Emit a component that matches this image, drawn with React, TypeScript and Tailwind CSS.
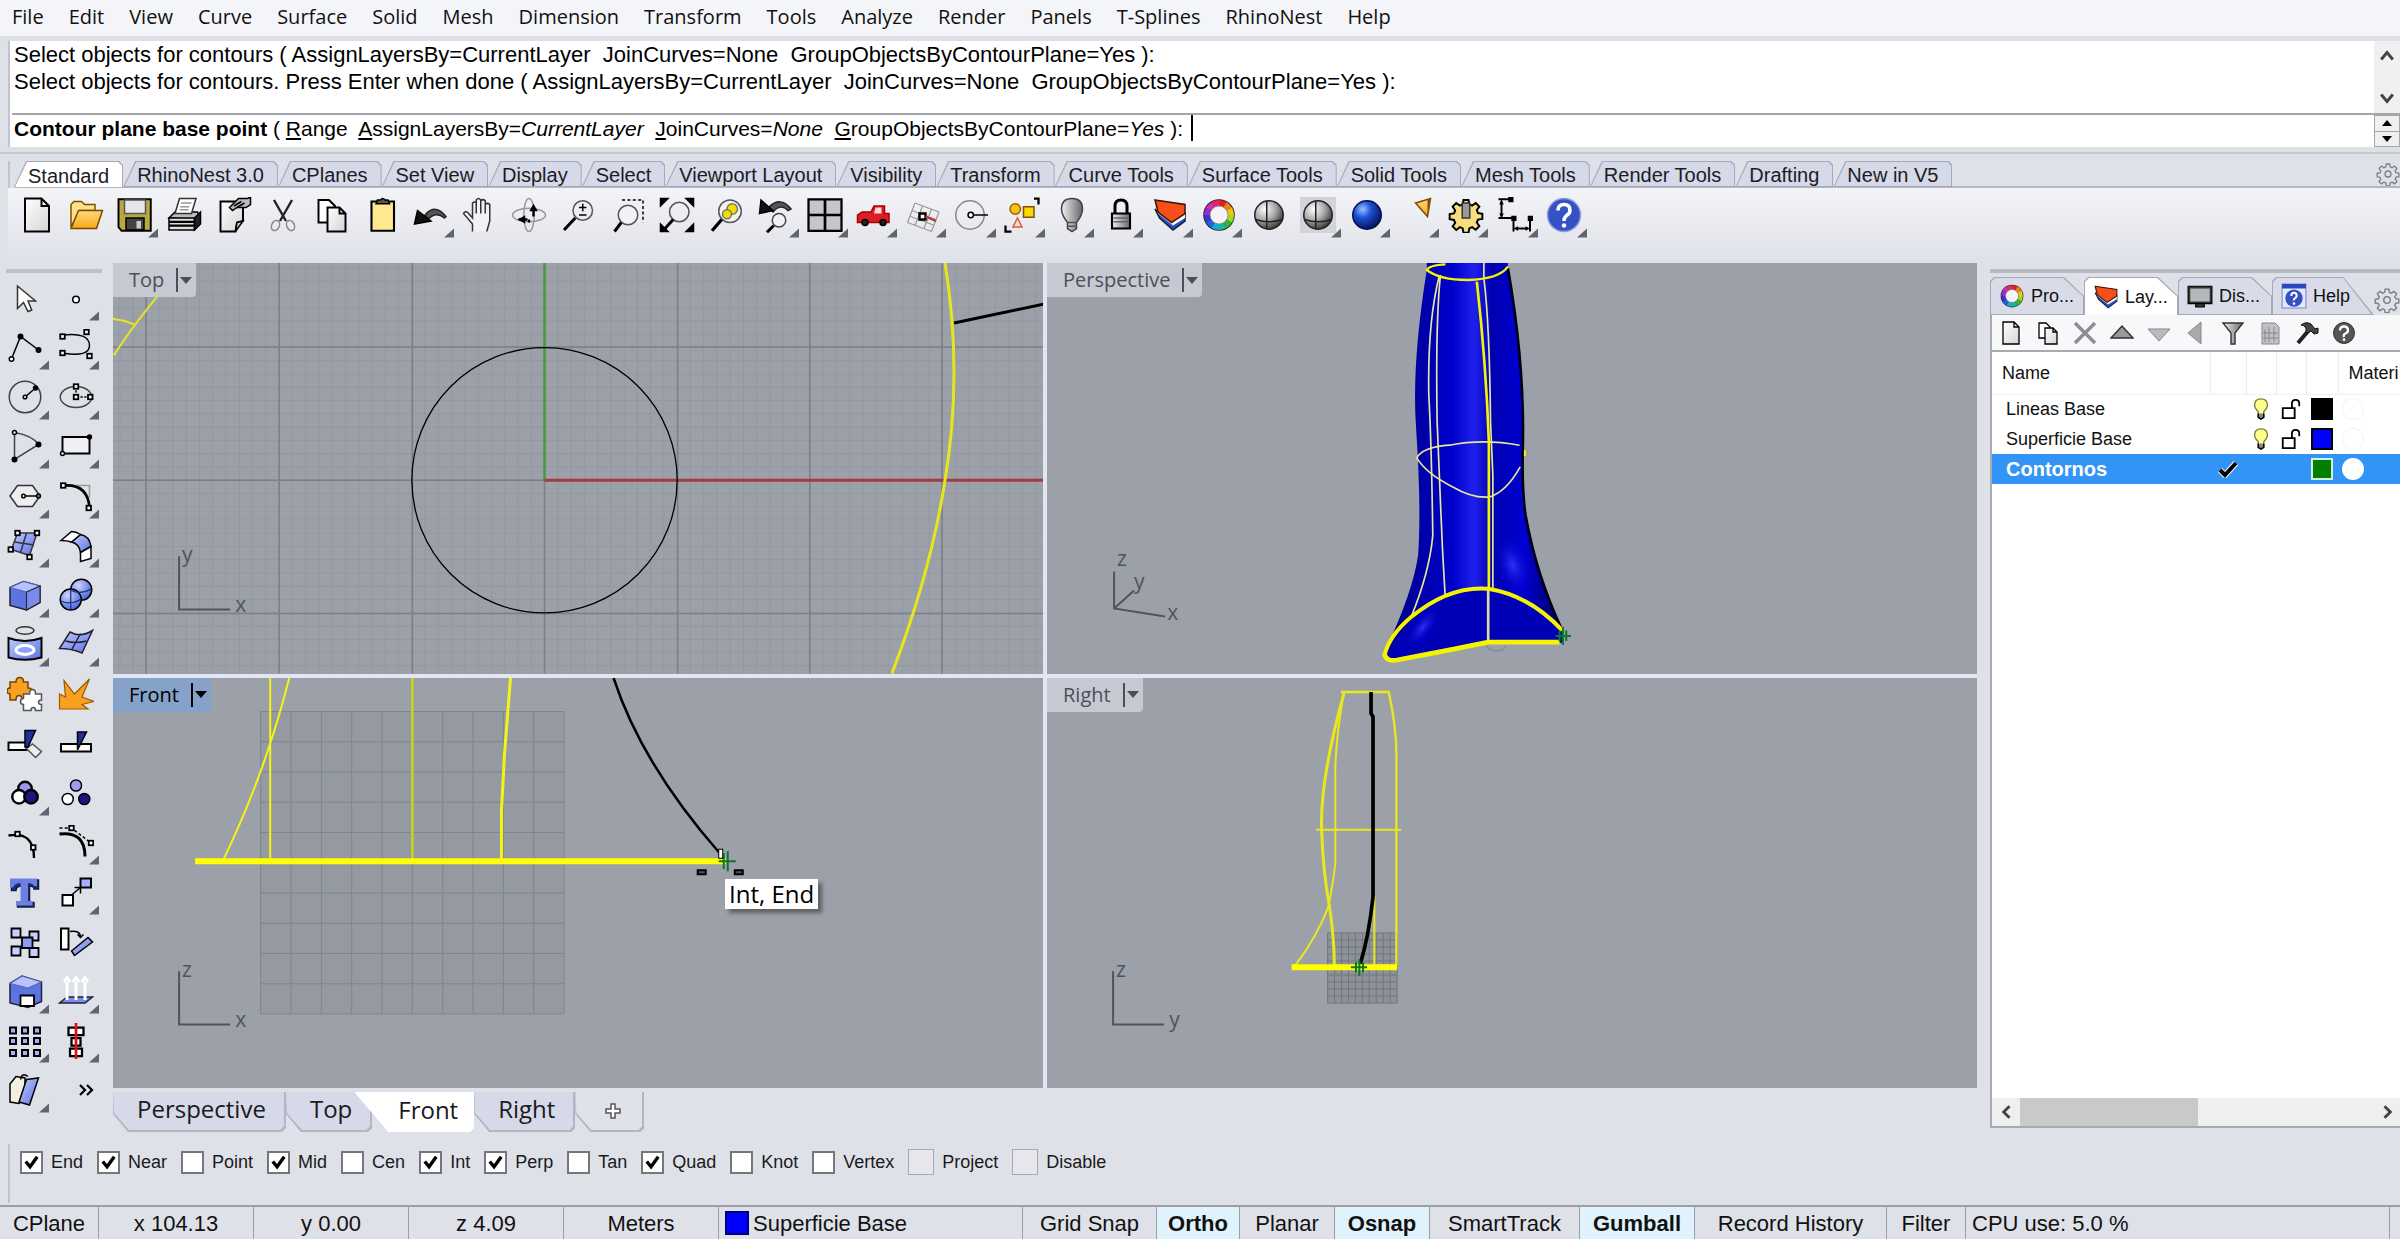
import { ReactNode, useState } from "react";

interface Tool {
  name: string;
  icon: ReactNode;
  menu?: boolean;
}

interface Layer {
  name: string;
  color: string;
  current?: boolean;
}

const MENUS = [
  "File", "Edit", "View", "Curve", "Surface", "Solid", "Mesh", "Dimension", "Transform",
  "Tools", "Analyze", "Render", "Panels", "T-Splines", "RhinoNest", "Help",
];

const TOOLBAR_TABS = [
  "Standard", "RhinoNest 3.0", "CPlanes", "Set View", "Display", "Select", "Viewport Layout",
  "Visibility", "Transform", "Curve Tools", "Surface Tools", "Solid Tools", "Mesh Tools",
  "Render Tools", "Drafting", "New in V5",
];

const LAYERS: Layer[] = [
  { name: "Lineas Base", color: "#000000" },
  { name: "Superficie Base", color: "#0000ff" },
  { name: "Contornos", color: "#008000", current: true },
];

const OSNAPS = [
  { name: "End", on: true },
  { name: "Near", on: true },
  { name: "Point", on: false },
  { name: "Mid", on: true },
  { name: "Cen", on: false },
  { name: "Int", on: true },
  { name: "Perp", on: true },
  { name: "Tan", on: false },
  { name: "Quad", on: true },
  { name: "Knot", on: false },
  { name: "Vertex", on: false },
  { name: "Project", on: false, dim: true },
  { name: "Disable", on: false, dim: true },
];

function Svg({ children, className = "size-9" }: { children: ReactNode; className?: string }) {
  return (
    <svg viewBox="0 0 24 24" className={className} fill="none" stroke="#000" strokeWidth={1} aria-hidden="true">
      {children}
    </svg>
  );
}

// gradients shared by every icon and by the shaded view
function Defs() {
  return (
    <svg className="absolute size-0" aria-hidden="true">
      <defs>
        <linearGradient id="gPage" x1="0" y1="0" x2="1" y2="1">
          <stop offset="0" stopColor="#fff" />
          <stop offset="1" stopColor="#d4d4d4" />
        </linearGradient>
        <linearGradient id="gFolder" x1="0" y1="0" x2="0" y2="1">
          <stop offset="0" stopColor="#ffd978" />
          <stop offset="1" stopColor="#f7a81b" />
        </linearGradient>
        <linearGradient id="gBlue" x1="0" y1="0" x2="1" y2="1">
          <stop offset="0" stopColor="#c3cbff" />
          <stop offset="1" stopColor="#5a72e0" />
        </linearGradient>
        <linearGradient id="gGrey" x1="0" y1="0" x2="1" y2="0">
          <stop offset="0" stopColor="#f0f0f0" />
          <stop offset="1" stopColor="#666" />
        </linearGradient>
        <radialGradient id="gBall" cx="0.35" cy="0.3" r="0.75">
          <stop offset="0" stopColor="#fff" />
          <stop offset="0.5" stopColor="#aaa" />
          <stop offset="1" stopColor="#333" />
        </radialGradient>
        <radialGradient id="gBallBlue" cx="0.35" cy="0.3" r="0.75">
          <stop offset="0" stopColor="#9cc4ff" />
          <stop offset="0.4" stopColor="#1c50d8" />
          <stop offset="1" stopColor="#02114f" />
        </radialGradient>
        <radialGradient id="gSoftBall" cx="0.35" cy="0.3" r="0.8">
          <stop offset="0" stopColor="#cdd6ff" />
          <stop offset="1" stopColor="#3e5bd0" />
        </radialGradient>
        <linearGradient id="gHandle" x1="0" y1="0" x2="1" y2="0">
          <stop offset="0" stopColor="#000078" />
          <stop offset="0.2" stopColor="#0000a8" />
          <stop offset="0.38" stopColor="#0000cc" />
          <stop offset="0.5" stopColor="#2020ec" />
          <stop offset="0.6" stopColor="#0000b0" />
          <stop offset="0.78" stopColor="#0000d2" />
          <stop offset="1" stopColor="#00005c" />
        </linearGradient>
        <radialGradient id="gHandleGlow">
          <stop offset="0" stopColor="#3030f4" />
          <stop offset="1" stopColor="#0000d0" stopOpacity="0" />
        </radialGradient>
        <pattern id="fineGrid" width="13.25" height="13.25" patternUnits="userSpaceOnUse" x="33" y="4.4">
          <path d="M0 .5H13.25M.5 0V13.25" fill="none" stroke="#7f858e" strokeOpacity="0.3" />
        </pattern>
      </defs>
    </svg>
  );
}

const HUES = ["#e02020", "#f08010", "#f0c810", "#a8d818", "#30b830", "#18b890", "#18a8d8", "#2060d8", "#4030c8", "#9030c8", "#d030b0", "#e02868"];

const colorWheel = (
  <>
    <circle cx="12" cy="12" r="10.5" fill="#222" stroke="none" />
    {HUES.map((hue, i) => (
      <circle key={hue} cx="12" cy="12" r="8" stroke={hue} strokeWidth="4" strokeDasharray="4.3 46" transform={`rotate(${i * 30 - 90} 12 12)`} />
    ))}
    <circle cx="12" cy="12" r="6" fill="#f4f4f8" stroke="#888" strokeWidth=".5" />
  </>
);

const layerShape = (
  <>
    <path d="M2 8 5 14 14 22 22 16V11L14 18z" fill="#2550c0" stroke="#123" />
    <path d="M2 5 4 11 14 19 22 14V9L14 15z" fill="#f4f4ff" stroke="none" />
    <path d="M2 2 22 5V11L13 17 4 10z" fill="#f4501c" stroke="#401000" />
  </>
);

const newPage = <path d="M4 1h11l5 5v17H4z M15 1v5h5" fill="url(#gPage)" strokeWidth="1.3" />;

const copyPages = (
  <>
    <path d="M3 2h7l4 4v11H3z" fill="#fff" strokeWidth="1.3" />
    <path d="M9 7h8l4 4v12H9z M17 7v4h4" fill="url(#gPage)" strokeWidth="1.3" />
  </>
);

const gearPath =
  "M10.3 2h3.4l.5 2.9 1.9.8 2.4-1.7 2.4 2.4-1.7 2.4.8 1.9 2.9.5v3.4l-2.9.5-.8 1.9 1.7 2.4-2.4 2.4-2.4-1.7-1.9.8-.5 2.9h-3.4l-.5-2.9-1.9-.8L5.5 22 3.1 19.6l1.7-2.4-.8-1.9-2.9-.5v-3.4l2.9-.5.8-1.9L3.1 6.4 5.5 4l2.4 1.7 1.9-.8z";

const STANDARD: Tool[] = [
  { name: "New", icon: newPage },
  {
    name: "Open",
    icon: (
      <>
        <path d="M2 20V5l2-2h5l2 2h7v4H8z" fill="#ffe08a" stroke="#7a5200" />
        <path d="M2 21 7 9h16l-4 12z" fill="url(#gFolder)" stroke="#7a4a00" />
      </>
    ),
  },
  {
    name: "Save",
    menu: true,
    icon: (
      <>
        <path d="M1 1.5h21.5v21H3L1 20z" fill="#b8a840" strokeWidth="1.3" />
        <path d="M5 2h14v9H5z" fill="#e4e6ea" stroke="#555" />
        <path d="M6 14h12v8H6z" fill="#444" />
        <path d="M13 16h3v5h-3z" fill="#ccc" stroke="none" />
      </>
    ),
  },
  {
    name: "Print",
    icon: (
      <>
        <path d="M2 14 6 10h15l1 2-3 3z" fill="#bbb" />
        <path d="M6 11 9 1h11l-3 10z" fill="#fff" stroke="#333" />
        <path d="M10 4h7M9.5 6.5h6M9 8.5h6" stroke="#999" />
        <path d="M2 14h17v8H2z" fill="#ddd" />
        <path d="M19 14 23 10v8l-4 4z" fill="#222" />
        <path d="M2 16.5h17M2 19h17" strokeWidth="1.5" />
      </>
    ),
  },
  {
    name: "Properties",
    icon: (
      <>
        <path d="M3 3h15v13l-4 1-1 6H3z" fill="url(#gPage)" strokeWidth="1.3" />
        <path d="M13 23l1-6 4-1z" fill="#ccc" />
        <path d="M9 7 15 1h6l2-1v5l-3 2h-6l-3 2z" fill="#bbb" />
        <path d="M12 6l5-3M14 7l5-3" />
      </>
    ),
  },
  {
    name: "Cut",
    icon: (
      <>
        <path d="M6 2l8 14M18 2l-8 14" stroke="#222" strokeWidth="1.6" />
        <ellipse cx="7" cy="19" rx="2.5" ry="3.5" stroke="#888" transform="rotate(25 7 19)" />
        <ellipse cx="17" cy="19" rx="2.5" ry="3.5" stroke="#888" transform="rotate(-25 17 19)" />
      </>
    ),
  },
  { name: "Copy", icon: copyPages },
  {
    name: "Paste",
    icon: (
      <>
        <path d="M5 3h15v19.5H5z" fill="#ffe890" strokeWidth="1.4" />
        <path d="M8 4.500h9L16 2h-2q-1.500-2-3 0H9z" fill="#555" />
      </>
    ),
  },
  {
    name: "Undo",
    menu: true,
    icon: (
      <>
        <path d="M8 12q7-8 14 1l-1 1q-6-5-11 1z" fill="#555" stroke="#222" />
        <path d="M1 18 3 9l9 7z" fill="#111" />
      </>
    ),
  },
  {
    name: "Pan",
    icon: (
      <path d="M7 23V18L1 11q1-2 3-.5L7 14V4q1.500-1.500 2.500 0V11 2q1.500-2 3 0v9V2.500q1.500-1.500 3 0V11 5q1.500-1.500 3 0v11l-2 7" fill="#f2f2f4" stroke="#333" />
    ),
  },
  {
    name: "Rotate view",
    icon: (
      <>
        <ellipse cx="12" cy="12" rx="3.5" ry="11" stroke="#999" />
        <ellipse cx="12" cy="12" rx="11" ry="4.5" stroke="#999" />
        <path d="M15 13V8M5 15h6M12 17v-2" strokeWidth="1.6" />
        <path d="M13 9l2-3.500L17 9zM9 13v4l-3.500-2z" fill="#000" />
      </>
    ),
  },
  {
    name: "Zoom dynamic",
    icon: (
      <>
        <circle cx="14.5" cy="9" r="6.5" stroke="#555" />
        <path d="M9.5 14 2 22" strokeWidth="2" />
        <path d="M14.5 4.5v5M12 7h5M12 12h5" />
      </>
    ),
  },
  {
    name: "Zoom window",
    icon: (
      <>
        <path d="M8 2h14v15" strokeDasharray="2 1.6" />
        <circle cx="12" cy="12" r="6.5" fill="#f2f2f5" stroke="#555" />
        <path d="M7.5 17 3 23" strokeWidth="2" />
      </>
    ),
  },
  {
    name: "Zoom extents",
    icon: (
      <>
        <path d="M1 6V1h5zM18 1h5v5zM23 18v5h-5zM1 18v5h5z" fill="#000" />
        <circle cx="13.5" cy="10" r="6.5" stroke="#555" />
        <path d="M9.5 15 4 21" strokeWidth="2" />
      </>
    ),
  },
  {
    name: "Zoom selected",
    icon: (
      <>
        <circle cx="14" cy="9.5" r="7.5" fill="#f4f4f4" stroke="#555" />
        <circle cx="15.5" cy="8" r="3.5" fill="#f0e000" stroke="#776" />
        <circle cx="12" cy="11.5" r="3" fill="#f0e000" stroke="#776" />
        <path d="M8.5 15 2 22.5" strokeWidth="2.2" />
      </>
    ),
  },
  {
    name: "Undo view change",
    menu: true,
    icon: (
      <>
        <path d="M7 7q8-8 15 1l-2 1q-5-5-10 1z" fill="#555" stroke="#222" />
        <path d="M1 11 2 2l8 7z" fill="#111" />
        <circle cx="14" cy="15.5" r="4.5" fill="#f2f2f5" stroke="#444" />
        <path d="M10.5 19 6 23.5" strokeWidth="2" />
      </>
    ),
  },
  {
    name: "Four viewports",
    menu: true,
    icon: (
      <>
        <path d="M1 1.5h22v21H1z" fill="#c4c6cc" strokeWidth="1.5" />
        <path d="M12 1.5v21M1 12h22" strokeWidth="1.8" />
      </>
    ),
  },
  {
    name: "Named view",
    menu: true,
    icon: (
      <>
        <path d="M1 12l3-2h6l2-4h7v5h3v6H1z" fill="#dc1c24" stroke="#a00" />
        <path d="M13 7h4v4h-5z" fill="#fbd8d8" stroke="none" />
        <circle cx="6" cy="17" r="2" fill="#222" />
        <circle cx="18" cy="17" r="2" fill="#222" />
      </>
    ),
  },
  {
    name: "Set CPlane",
    menu: true,
    icon: (
      <>
        <path d="M6 4 1 17M11 6 6 19M17 8l-5 13M22 10l-5 13M6 4l16 6M4 9l16 6M3 13l16 6M1 17l16 6" stroke="#999" strokeWidth=".8" />
        <path d="M9 11h4v4H9z" fill="#fff" strokeWidth="1.6" />
        <path d="M13 13l7 3" stroke="#c03030" strokeWidth="1.5" />
      </>
    ),
  },
  {
    name: "Object snap",
    menu: true,
    icon: (
      <>
        <circle cx="10" cy="12" r="9.5" stroke="#888" />
        <path d="M12 12h10" />
        <circle cx="10.5" cy="12" r="1.8" fill="#fff" />
      </>
    ),
  },
  {
    name: "Select",
    menu: true,
    icon: (
      <>
        <path d="M1 19v4h4M20 1h3v4" strokeWidth="1.5" />
        <circle cx="7.5" cy="8" r="3.5" fill="#fbc010" stroke="#a06000" />
        <path d="M13 6.5h7v7h-7z" fill="#fbd800" stroke="#805000" />
        <path d="M9 14l3 6H6z" fill="#ffe0d0" stroke="#d06040" />
      </>
    ),
  },
  {
    name: "Hide",
    menu: true,
    icon: (
      <>
        <path d="M12 1q7 0 7 7 0 4-4 9v4l-3 2-3-2v-4Q5 12 5 8q0-7 7-7z" fill="url(#gGrey)" stroke="#444" />
        <path d="M9 17h6M9 19.5h6" stroke="#555" />
      </>
    ),
  },
  {
    name: "Lock",
    menu: true,
    icon: (
      <>
        <path d="M8 11V6q0-4 4-4t4 4v5" strokeWidth="2" />
        <path d="M6 11h12v10H6z" fill="url(#gGrey)" strokeWidth="1.4" />
        <path d="M7 14h10M7 16.5h10" stroke="#666" />
      </>
    ),
  },
  { name: "Layer", menu: true, icon: layerShape },
  { name: "Object properties", menu: true, icon: colorWheel },
  {
    name: "Shade",
    icon: (
      <>
        <circle cx="12" cy="12" r="9.5" fill="url(#gBall)" stroke="#222" />
        <path d="M10.5 2.5v19M3 15q9 3 18 0" stroke="#222" />
      </>
    ),
  },
  {
    name: "Shaded viewport",
    menu: true,
    icon: (
      <>
        <path d="M0 0h24v24H0z" fill="#d2d4da" stroke="none" />
        <circle cx="12" cy="12" r="9.5" fill="url(#gBall)" stroke="#222" />
        <path d="M10.5 2.5v19M3 15q9 3 18 0" stroke="#222" />
      </>
    ),
  },
  { name: "Render", menu: true, icon: <circle cx="12" cy="12" r="9.5" fill="url(#gBallBlue)" stroke="#02114f" /> },
  {
    name: "Spotlight",
    menu: true,
    icon: (
      <>
        <path d="M11 4 21 1 19 13z" fill="url(#gFolder)" stroke="#7a4a00" />
        <path d="M19 2l2-1-2 12z" fill="#8a4a00" stroke="none" />
      </>
    ),
  },
  {
    name: "Options",
    menu: true,
    icon: (
      <>
        <path d={gearPath} fill="#f8dc80" strokeWidth="1.3" />
        <path d="M9.5 4h5v10h-5z" fill="#999" stroke="#333" />
      </>
    ),
  },
  {
    name: "Dimension",
    menu: true,
    icon: (
      <>
        <path d="M1 1.5h8M1 14h9M3 3v10M11 14v9M22 14v9M13 21h7" strokeWidth="1.3" />
        <path d="M3 1.500 1.500 5h3zM3 14l-1.500-3h3zM11 21l3-1.500v3zM22 21l-3-1.500v3z" fill="#000" stroke="none" />
        <path d="M8 .5h2.500v2.500H8zM10 13h2.500v2.500H10zM21 13h2.500v2.500H21z" fill="#000" />
      </>
    ),
  },
  {
    name: "Help",
    menu: true,
    icon: (
      <>
        <circle cx="12" cy="12" r="11" fill="#3552c4" stroke="#8c9ce8" />
        <path d="M8 9q0-4 4-4t4 4q0 2-2.500 3.500Q12 14 12 16" stroke="#fff" strokeWidth="2.4" />
        <circle cx="12" cy="19" r="1.5" fill="#fff" stroke="none" />
      </>
    ),
  },
];

const knot = (x: number, y: number) => <rect x={x - 1.5} y={y - 1.5} width="3" height="3" fill="#fff" strokeWidth="1.2" />;

const SIDE: Tool[] = [
  {
    name: "Pointer",
    icon: <path d="M7 4v15l4-4 3 6 2.5-1L14 14h5z" fill="#fff" stroke="#333" />,
  },
  { name: "Point", menu: true, icon: <circle cx="12" cy="13" r="2.2" fill="#fff" /> },
  {
    name: "Polyline",
    menu: true,
    icon: (
      <>
        <path d="M3 20 9 5l12 9" />
        <circle cx="3" cy="20" r="1.5" fill="#fff" />
        <circle cx="9" cy="5" r="1.5" fill="#000" />
        <circle cx="21" cy="14" r="1.5" fill="#000" />
      </>
    ),
  },
  {
    name: "Curve",
    menu: true,
    icon: (
      <>
        <path d="M3 4q18-2 18 7 0 8-18 5" />
        {knot(3, 5)}
        {knot(19, 2)}
        {knot(3, 16)}
        {knot(21, 18)}
      </>
    ),
  },
  {
    name: "Circle",
    menu: true,
    icon: (
      <>
        <circle cx="12" cy="12" r="10.5" stroke="#444" />
        <path d="M12 12l7-6" />
        <circle cx="12" cy="12" r="1.2" fill="#fff" />
        <circle cx="19" cy="6" r="1.3" fill="#000" />
      </>
    ),
  },
  {
    name: "Ellipse",
    menu: true,
    icon: (
      <>
        <ellipse cx="12" cy="12" rx="10.5" ry="7" stroke="#444" />
        <path d="M12 5v7h9" strokeDasharray="1.5 1" />
        {knot(12, 5)}
        {knot(12, 12)}
        {knot(21.5, 12)}
      </>
    ),
  },
  {
    name: "Arc",
    menu: true,
    icon: (
      <>
        <path d="M5 3q12 2 16 8L5 21z" stroke="#444" />
        <circle cx="5" cy="3" r="1.3" fill="#fff" />
        <circle cx="21" cy="11" r="1.5" fill="#000" />
        <circle cx="5" cy="21" r="1.5" fill="#000" />
      </>
    ),
  },
  {
    name: "Rectangle",
    menu: true,
    icon: (
      <>
        <path d="M3 6h18v11H3z" fill="#f0f0f4" strokeWidth="1.3" />
        <circle cx="21" cy="6" r="1.3" fill="#000" />
        <circle cx="3" cy="17" r="1.3" fill="#fff" />
      </>
    ),
  },
  {
    name: "Polygon",
    menu: true,
    icon: (
      <>
        <path d="M2 12 7 5h10l5 7-5 7H7z" fill="#eee" stroke="#333" />
        <path d="M11 12h10" />
        <circle cx="11" cy="12" r="1.2" fill="#fff" />
        <circle cx="21" cy="12" r="1.3" fill="#777" />
      </>
    ),
  },
  {
    name: "Fillet",
    menu: true,
    icon: (
      <>
        <path d="M12 5h9v8" stroke="#999" />
        <path d="M4 5q16-1 17 15" strokeWidth="1.8" />
        {knot(3.5, 5)}
        {knot(20.5, 20)}
      </>
    ),
  },
  {
    name: "Surface",
    menu: true,
    icon: (
      <>
        <path d="M7 4h13l-5 15L3 15z" fill="url(#gBlue)" stroke="#334" />
        <path d="M13 4 9 17M5 10l13 2" stroke="#334" />
        {knot(7, 4)}
        {knot(20, 4)}
        {knot(2.5, 15)}
        {knot(15, 20)}
      </>
    ),
  },
  {
    name: "Loft",
    menu: true,
    icon: (
      <>
        <path d="M9 10 15 5q6 1 7 8l-7 4q-1-6-6-7z" fill="url(#gBlue)" />
        <path d="M2 9l7-6q3 0 6 2l-6 5q-3-1-7-1z" fill="#fff" />
        <path d="M15 17l7-4v8l-7 2z" fill="#fff" />
      </>
    ),
  },
  {
    name: "Box",
    menu: true,
    icon: (
      <>
        <path d="M2 7 11 3l11 3v11l-9 5L2 19z" fill="#5c74e0" stroke="#223" />
        <path d="M2 7 11 3l11 3-9 4z" fill="#b8c2ff" stroke="#56a" strokeWidth=".7" />
        <path d="M13 10v12l9-5V6z" fill="#7c8cec" stroke="#223" strokeWidth=".7" />
      </>
    ),
  },
  {
    name: "Boolean",
    menu: true,
    icon: (
      <>
        <circle cx="15.5" cy="8.5" r="7" fill="url(#gSoftBall)" />
        <circle cx="8.5" cy="15" r="7" fill="url(#gSoftBall)" />
        <path d="M2 16q6 3 13-1M8.5 8v14M9 9q6 3 13-1" stroke="#1c2c80" strokeWidth=".8" />
      </>
    ),
  },
  {
    name: "Surface from curves",
    menu: true,
    icon: (
      <>
        <ellipse cx="12" cy="3" rx="6" ry="2.5" stroke="#333" />
        <path d="M1 8q11 4 22 0v13q-11 3-22 0z" fill="url(#gBlue)" strokeWidth="1.3" />
        <ellipse cx="12" cy="16" rx="6" ry="3" fill="#8ca0ff" stroke="#fff" strokeWidth="2" />
      </>
    ),
  },
  {
    name: "Mesh",
    menu: true,
    icon: (
      <>
        <path d="M1 15 8 4q7 4 15-1l-7 15q-7-3-15-3z" fill="url(#gBlue)" stroke="#223" />
        <path d="M5 10q7 2 14 0M9 16 15 5" stroke="#223" />
      </>
    ),
  },
  {
    name: "Plugins",
    icon: (
      <>
        <path d="M2 4h4q0-3 2.500-3T11 4h3v4q3 0 3 2.500T14 13v3h-4q0-3-2-3t-2 3H2v-4q-2 0-2-2t2-2z" fill="#f8a020" stroke="#734400" />
        <path d="M11 12h4q0-3 2-3t2 3h4v4q-2 0-2 1.500t2 1.500v4h-4q0-2-1.500-2T16 23h-5v-4q-2 0-2-2t2-2z" fill="#fff" stroke="#555" />
      </>
    ),
  },
  { name: "Explode", icon: <path d="M1 22V12l4 2-1-11 7 9L21 2l-5 12 8 3-8 2 4 3z" fill="#f8a020" stroke="#a05800" strokeWidth=".8" /> },
  {
    name: "Trim",
    icon: (
      <>
        <path d="M1 11h12v5H1z" fill="#fff" strokeWidth="1.3" />
        <path d="M13 15l4-3 6 5-4 4z" fill="#eee" stroke="#555" />
        <path d="M12 3h7l-5 11h-2z" fill="#20309a" />
      </>
    ),
  },
  {
    name: "Split",
    icon: (
      <>
        <path d="M2 12h20v5H2z" fill="#fff" strokeWidth="1.3" />
        <path d="M13 4h6l-6 12z" fill="#20309a" />
      </>
    ),
  },
  {
    name: "Group",
    menu: true,
    icon: (
      <>
        <circle cx="12" cy="9" r="4.5" fill="#9c94ee" strokeWidth="1.6" />
        <circle cx="8" cy="14.5" r="4.5" fill="#fff" strokeWidth="1.6" />
        <circle cx="16" cy="14.5" r="4.5" fill="#1c1480" strokeWidth="1.6" />
      </>
    ),
  },
  {
    name: "Ungroup",
    icon: (
      <>
        <circle cx="12" cy="7" r="3.7" fill="#a49cf4" />
        <circle cx="6.5" cy="16" r="3.7" fill="#fff" />
        <circle cx="17.5" cy="16" r="3.7" fill="#1c1480" />
      </>
    ),
  },
  {
    name: "Edit points",
    icon: (
      <>
        <path d="M1 7q17-3 17 15" strokeWidth="1.6" />
        {knot(7, 6)}
        {knot(17.5, 15)}
      </>
    ),
  },
  {
    name: "Control points",
    menu: true,
    icon: (
      <>
        <path d="M1 2h8l13 10" strokeDasharray="2 1.5" />
        <path d="M1 6q17-2 17 15" strokeWidth="2" />
        {knot(9, 2)}
        {knot(22, 12)}
      </>
    ),
  },
  {
    name: "Text",
    icon: (
      <>
        <path d="M3 4h18v6h-3q0-2-3-2v11h3v3H7v-3h3V8q-4 0-4 3H3z" fill="#1c2c90" stroke="#123" />
        <path d="M2 3h18v5h-2q-1-2-4-2v12h3v3H6v-3h3V6q-4 0-5 3H2z" fill="#6c80e4" stroke="none" />
      </>
    ),
  },
  {
    name: "Move",
    menu: true,
    icon: (
      <>
        <path d="M3 14h7v7H3z" fill="#fff" strokeWidth="1.3" />
        <path d="M15 3h7v6h-7z" fill="#a4b0ff" strokeWidth="1.3" />
        <path d="M9 14l6-5M11 9h4v4" />
      </>
    ),
  },
  {
    name: "Copy objects",
    icon: (
      <>
        <path d="M3 3h6v6H3zM3 15h6v6H3zM15 5h6v6h-6zM15 16h6v6h-6z" fill="#c8d0ff" strokeWidth="1.2" />
        <path d="M10 9h7v7h-7z" fill="#8c9cf4" strokeWidth="1.2" />
      </>
    ),
  },
  {
    name: "Rotate",
    icon: (
      <>
        <path d="M2 3h5v14H2z" fill="#fff" strokeWidth="1.3" />
        <path d="M9 18 20 9l3 3-12 9z" fill="url(#gBlue)" />
        <path d="M8 5q7-1 7 4M13 7l2 2 2-2" />
      </>
    ),
  },
  {
    name: "Solid edit",
    menu: true,
    icon: (
      <>
        <path d="M2 7 10 2l13 4v13l-9 4-12-3z" fill="#5c74e0" stroke="#223" />
        <path d="M2 7l8-5 13 4-9 4z" fill="#b8c2ff" stroke="#56a" strokeWidth=".7" />
        <path d="M9 15h9v7H9z" fill="#fff" strokeWidth="1.2" />
      </>
    ),
  },
  {
    name: "Project",
    menu: true,
    icon: (
      <>
        <path d="M1 20 6 16h17l-5 4z" fill="#7c8cf0" stroke="#223" />
        <path d="M6 6v12M12 6v12M18 6v12M4 6l2-3 2 3M10 6l2-3 2 3M16 6l2-3 2 3" stroke="#fff" strokeWidth="2" />
      </>
    ),
  },
  {
    name: "Array",
    menu: true,
    icon: <path d="M2 3h4v4H2zM10 3h4v4h-4zM18 3h4v4h-4zM2 10h4v4H2zM10 10h4v4h-4zM18 10h4v4h-4zM2 18h4v4H2zM10 18h4v4h-4zM18 18h4v4h-4z" fill="#a4b0f8" strokeWidth="1.3" />,
  },
  {
    name: "Align",
    menu: true,
    icon: (
      <>
        <path d="M7 3h10v5H7zM9 10h6v5H9zM8 17h8v5H8z" fill="#fff" strokeWidth="1.5" />
        <path d="M12 0v24" stroke="#e01010" strokeWidth="1.8" />
      </>
    ),
  },
  {
    name: "Flow",
    menu: true,
    icon: (
      <>
        <path d="M2 8 6 3l6 1v13l-4 4-6-1z" fill="#f4f0e0" />
        <path d="M13 5l8-1-6 18-7-2z" fill="url(#gBlue)" />
        <path d="M9 5q1-5 5-2" />
      </>
    ),
  },
];

function CornerMark() {
  return (
    <svg viewBox="0 0 11 10" className="absolute right-0.5 bottom-0.5 h-2.5 w-2.5" aria-hidden="true">
      <path d="M11 0v10H0z" fill="#63656c" />
    </svg>
  );
}

function ToolButton({ tool }: { tool: Tool }) {
  return (
    <button type="button" aria-label={tool.name} className="relative flex min-w-0 items-center justify-center">
      <Svg>{tool.icon}</Svg>
      {tool.menu && <CornerMark />}
    </button>
  );
}

function Gear({ className }: { className: string }) {
  return (
    <Svg className={className}>
      <path d={gearPath} stroke="#7c7e86" strokeWidth="1.3" />
      <circle cx="12" cy="12" r="3" stroke="#7c7e86" strokeWidth="1.3" />
    </Svg>
  );
}

function MenuBar() {
  return (
    <nav className="flex h-9 items-center gap-[25px] bg-[#f4f5f9] pb-0.5 pl-3 font-['Open_Sans',sans-serif] text-xl text-[#111]">
      {MENUS.map((m) => (
        <button key={m} type="button">{m}</button>
      ))}
    </nav>
  );
}

function Chevron({ d, className }: { d: string; className: string }) {
  return (
    <svg viewBox="0 0 12 12" className={className} fill="none" stroke="#444" strokeWidth="2.5" aria-hidden="true">
      <path d={d} />
    </svg>
  );
}

function CommandArea() {
  return (
    <section className="border-t-[5px] border-[#dfe0e5] bg-[#dfe1e8] pl-2">
      <div className="border-l-2 border-[#c2c4cc] bg-white pl-0.5">
        <div className="flex h-[74px] border-b-2 border-[#a4a6ac] text-[22px]">
          <div className="flex-1 pl-0.5 leading-[27px] whitespace-pre">
            <p>Select objects for contours ( AssignLayersBy=CurrentLayer  JoinCurves=None  GroupObjectsByContourPlane=Yes ):</p>
            <p>Select objects for contours. Press Enter when done ( AssignLayersBy=CurrentLayer  JoinCurves=None  GroupObjectsByContourPlane=Yes ):</p>
          </div>
          <div className="flex w-[26px] flex-col items-center justify-between bg-[#f0f0f0] py-2">
            <button type="button" aria-label="Scroll up"><Chevron d="M1 9l5-6 5 6" className="size-3.5" /></button>
            <button type="button" aria-label="Scroll down"><Chevron d="M1 3l5 6 5-6" className="size-3.5" /></button>
          </div>
        </div>
        <div className="flex h-8 text-[21px]">
          <label htmlFor="prompt" className="pl-0.5 leading-[28px] whitespace-pre">
            <b>Contour plane base point</b> ( <u>R</u>ange  <u>A</u>ssignLayersBy=<i>CurrentLayer</i>  <u>J</u>oinCurves=<i>None</i>  <u>G</u>roupObjectsByContourPlane=<i>Yes</i> ):
          </label>
          <input id="prompt" type="text" className="ml-2 h-[26px] flex-1 border-l-2 border-black outline-none" />
          <div className="flex w-[26px] flex-col border border-[#a4a6ac] bg-[#f0f0f0] text-black">
            <button type="button" aria-label="Previous" className="flex flex-1 items-center justify-center border-b border-[#a4a6ac]">
              <svg viewBox="0 0 10 6" className="w-2.5"><path d="M5 0l5 6H0z" /></svg>
            </button>
            <button type="button" aria-label="Next" className="flex flex-1 items-center justify-center">
              <svg viewBox="0 0 10 6" className="w-2.5"><path d="M0 0h10L5 6z" /></svg>
            </button>
          </div>
        </div>
      </div>
      <div className="-ml-2 h-3.5 border-t-[5px] border-[#dfe0e5]">
        <div className="h-0.5 bg-[#c6c8d0]" />
      </div>
    </section>
  );
}

function ToolbarTab({ name, active, onClick }: { name: string; active: boolean; onClick: () => void }) {
  return (
    <button
      type="button"
      onClick={onClick}
      className="h-[26px] bg-[#a6a9b6] p-px pb-0 [clip-path:polygon(0_100%,12px_0,calc(100%-4px)_0,100%_4px,100%_100%)]"
    >
      <span
        className={`flex h-full items-center px-[13px] pt-0.5 whitespace-nowrap [clip-path:polygon(0_100%,12px_0,calc(100%-4px)_0,100%_4px,100%_100%)] ${
          active ? "bg-white" : "border-b border-[#a6a9b6] bg-[#d6d9e8]"
        }`}
      >
        {name}
      </span>
    </button>
  );
}

function Toolbars() {
  const [tab, setTab] = useState("Standard");
  return (
    <section className="bg-[#dfe1e9] pl-2">
      <div className="border-l-2 border-[#c2c4cc] pl-1">
        <div className="flex items-end justify-between border-b-2 border-[#b4b7c2] text-xl text-[#1c1c24]">
          <div className="-mb-px flex">
            {TOOLBAR_TABS.map((t) => (
              <ToolbarTab key={t} name={t} active={t === tab} onClick={() => setTab(t)} />
            ))}
          </div>
          <button type="button" aria-label="Toolbar options"><Gear className="size-6" /></button>
        </div>
      </div>
      <div className="h-[75px] bg-linear-to-b from-[#f3f4f7] to-[#dfe1e9] pt-0.5">
        <div className="grid h-[50px] w-[1581px] grid-cols-[repeat(32,minmax(0,1fr))] pl-1">
          {STANDARD.map((t) => <ToolButton key={t.name} tool={t} />)}
        </div>
      </div>
    </section>
  );
}

function SideTools() {
  return (
    <aside className="w-[113px] pt-1.5">
      <div className="ml-1.5 h-1 w-24 bg-[#bfc1ca]" />
      <div className="grid h-[842px] w-[101px] grid-cols-2 grid-rows-[repeat(17,minmax(0,1fr))]">
        {SIDE.map((t) => <ToolButton key={t.name} tool={t} />)}
        <button type="button" aria-label="More tools" className="flex items-center justify-center pl-5">
          <svg viewBox="0 0 16 12" className="w-4" fill="none" stroke="#000" strokeWidth="2.2">
            <path d="M2 1l5 5-5 5M9 1l5 5-5 5" />
          </svg>
        </button>
      </div>
    </aside>
  );
}

function Viewport({ name, active, children }: { name: string; active?: boolean; children: ReactNode }) {
  return (
    <div className="relative overflow-hidden bg-[#9ca0a8] font-['Open_Sans',sans-serif]">
      <svg viewBox="0 0 930 410" preserveAspectRatio="xMinYMin slice" className="absolute inset-0 size-full" fill="none">
        {children}
      </svg>
      <button
        type="button"
        className={`absolute top-0 left-0 flex h-[34px] items-center gap-3 pr-1 pl-4 text-xl ${
          active ? "bg-[#86a2c8] text-black" : "rounded-br-sm bg-[#c6c9d2] text-[#4c4f58]"
        }`}
      >
        {name}
        <span className="flex h-6 items-center border-l-2 border-current pl-0.5">
          <svg viewBox="0 0 12 7" className="w-3 fill-current"><path d="M0 0h12L6 7z" /></svg>
        </span>
      </button>
    </div>
  );
}

function Axes({ up, right }: { up: string; right: string }) {
  return (
    <g fill="#50545c" fontSize="21">
      <path d="M66 293v53h51" fill="none" stroke="#50545c" strokeWidth="2" />
      <text x="69" y="299">{up}</text>
      <text x="122" y="349">{right}</text>
    </g>
  );
}

function TopView() {
  const columns = [33, 166, 299, 431, 564, 696, 828];
  const rows = [84, 217, 350];
  return (
    <Viewport name="Top">
      <rect width="930" height="410" fill="url(#fineGrid)" />
      <g stroke="#7a7f88" strokeWidth="1.5">
        {columns.map((x) => <path key={x} d={`M${x} 0V410`} />)}
        {rows.map((y) => <path key={y} d={`M0 ${y}H930`} />)}
      </g>
      <path d="M431 0V217" stroke="#449a3c" strokeWidth="2.5" />
      <path d="M431 217H930" stroke="#a03c42" strokeWidth="3" />
      <circle cx="431" cy="217" r="132.5" stroke="#000" strokeWidth="1.3" />
      <path d="M831 0Q849 110 831 217Q817 308 778 410" stroke="#e6e61c" strokeWidth="3" />
      <path d="M840 60 930 41" stroke="#000" strokeWidth="3" />
      <path d="M52 24Q20 62 1 92M0 56l12 2 11 4" stroke="#e6e61c" strokeWidth="2" />
      <Axes up="y" right="x" />
    </Viewport>
  );
}

function FrontView() {
  const steps = Array.from({ length: 11 }, (_, i) => i);
  return (
    <Viewport name="Front" active>
      <rect x="147" y="33" width="303" height="302" fill="#959aa2" />
      <g stroke="#7f848d">
        {steps.map((i) => <path key={i} d={`M${147.5 + i * 30.3} 33V335M147 ${33.5 + i * 30.2}H450`} />)}
      </g>
      <g stroke="#f4f414" strokeWidth="2">
        <path d="M157 0V182M176 0Q152 95 110 182" />
        <path d="M299 0V182" stroke="#c8d810" strokeWidth="2.5" />
        <path d="M397 0 391 76 388 133V182" strokeWidth="3" />
        <path d="M82 183H612" stroke="#ffff00" strokeWidth="6" />
      </g>
      <path d="M500 0Q528 86 606 175" stroke="#000" strokeWidth="2.5" />
      <g stroke="#0a7828" strokeWidth="2">
        <path d="M605 183h17M610 175v16M614 173v20" />
      </g>
      <rect x="605" y="171" width="4" height="9" fill="#fff" stroke="#000" />
      <path d="M584 192h8v4h-8zM621 192h8v4h-8z" fill="#555" stroke="#000" strokeWidth="2" />
      <Axes up="z" right="x" />
    </Viewport>
  );
}

function PerspectiveView() {
  return (
    <Viewport name="Perspective">
      <g transform="translate(292 -8) scale(.3333)" strokeLinejoin="round">
        <path d="M440 1172q20 20 50 12l8-12" stroke="#888c94" strokeWidth="5" />
        <path d="M262 20V45Q216 330 230 520Q246 760 236 900Q220 1010 140 1180V1212Q300 1190 440 1162H668V1125Q590 960 558 780Q548 700 552 560Q554 320 505 40V20z" fill="url(#gHandle)" />
        <path d="M505 40Q554 320 550 560 546 700 558 780 590 960 668 1125" stroke="#000018" strokeWidth="8" />
        <ellipse cx="520" cy="930" rx="50" ry="90" fill="url(#gHandleGlow)" transform="rotate(-18 520 930)" />
        <path d="M140 1200Q180 1105 315 1025 440 960 560 1035 620 1065 668 1130V1158H446Q300 1180 150 1215z" fill="#0000b6" />
        <ellipse cx="250" cy="1115" rx="30" ry="75" fill="url(#gHandleGlow)" transform="rotate(38 250 1115)" />
        <g stroke="#e6e6a0" strokeWidth="5">
          <path d="M300 60Q264 200 268 420 276 560 280 840 270 950 215 1085M303 60Q288 200 293 500L303 740Q308 880 317 1020" />
          <path d="M433 20V70Q450 200 453 500L460 660V998" />
          <path d="M232 608Q250 575 330 570 430 550 540 570M232 608Q260 655 340 695 400 730 450 725 500 710 542 635" />
        </g>
        <g stroke="#f4f400">
          <path d="M412 80Q440 330 448 560V998" strokeWidth="8" />
          <path d="M318 28Q270 30 262 45 300 75 385 75 480 72 505 35" strokeWidth="7" />
          <path d="M446 1000V1155" stroke="#dcdca8" strokeWidth="8" />
          <path d="M135 1200Q150 1140 215 1085 330 990 446 1000 570 1020 668 1125" strokeWidth="12" />
          <path d="M135 1195Q140 1222 180 1212 300 1190 446 1160H660" strokeWidth="14" />
          <path d="M556 585v18" strokeWidth="6" />
        </g>
        <path d="M648 1142h46M670 1115v54M660 1125v32M680 1125v32" stroke="#0a7828" strokeWidth="6" />
      </g>
      <path d="M67 308V345L118 353M67 345 87 327" stroke="#50545c" strokeWidth="2" />
      <g fill="#50545c" fontSize="21">
        <text x="70" y="303">z</text>
        <text x="87" y="326">y</text>
        <text x="120" y="357">x</text>
      </g>
    </Viewport>
  );
}

function RightView() {
  const steps = Array.from({ length: 11 }, (_, i) => i);
  return (
    <Viewport name="Right">
      <g transform="translate(-7 -8) scale(.3333)">
        <rect x="862" y="788" width="208" height="210" fill="#8e939b" />
        <g stroke="#70757e" strokeWidth="3">
          {steps.map((i) => <path key={i} d={`M${862 + i * 20.8} 788V998M862 ${788 + i * 21}H1070`} />)}
        </g>
        <g stroke="#e8e81c" strokeWidth="7">
          <path d="M902 66H1045Q1070 180 1068 270V885" />
          <path d="M912 66Q838 330 844 480 848 600 866 700 882 800 882 885" strokeWidth="9" />
          <path d="M910 66Q882 240 885 330V580Q878 640 864 710 830 800 765 885" strokeWidth="6" />
          <path d="M828 479H1082M1002 675V885" strokeWidth="6" />
          <path d="M754 891H1070" stroke="#ffff00" strokeWidth="18" />
        </g>
        <path d="M992 66V130L998 140V680Q985 800 960 880" stroke="#000" strokeWidth="11" />
        <path d="M932 891h48M957 866v50M947 876v30M968 876v30" stroke="#0a7828" strokeWidth="6" />
      </g>
      <Axes up="z" right="y" />
    </Viewport>
  );
}

function ViewTabs() {
  const [view, setView] = useState("Front");
  return (
    <div className="mt-1 flex h-10 font-['Open_Sans',sans-serif] text-2xl text-[#1a1a22]">
      {["Perspective", "Top", "Front", "Right"].map((v) =>
        v === view ? (
          <button
            key={v}
            type="button"
            className="-ml-[18px] bg-white pr-4 pb-1 pl-11 [clip-path:polygon(0_0,100%_0,100%_calc(100%-4px),calc(100%-4px)_100%,34px_100%)]"
          >
            {v}
          </button>
        ) : (
          <button
            key={v}
            type="button"
            onClick={() => setView(v)}
            className="bg-[#b2b5c2] pr-0.5 pb-0.5 [clip-path:polygon(0_0,100%_0,100%_calc(100%-4px),calc(100%-4px)_100%,15px_100%,0_55%)]"
          >
            <span className="flex h-full items-center bg-[#d6d9e8] pr-[18px] pb-1 pl-6 [clip-path:polygon(0_0,100%_0,100%_calc(100%-4px),calc(100%-4px)_100%,16px_100%,1px_55%)]">
              {v}
            </span>
          </button>
        ),
      )}
      <button
        type="button"
        aria-label="New view"
        className="w-[69px] bg-[#b2b5c2] pr-0.5 pb-0.5 [clip-path:polygon(0_0,100%_0,100%_calc(100%-4px),calc(100%-4px)_100%,15px_100%,0_55%)]"
      >
        <span className="flex h-full items-center justify-center bg-[#e0e2ea] pl-2 [clip-path:polygon(0_0,100%_0,100%_calc(100%-4px),calc(100%-4px)_100%,16px_100%,1px_55%)]">
          <svg viewBox="0 0 16 16" className="w-4" fill="#fff" stroke="#555" strokeWidth="1.5">
            <path d="M6 1h4v5h5v4h-5v5H6v-5H1V6h5z" />
          </svg>
        </span>
      </button>
    </div>
  );
}

const PANEL_TABS: Tool[] = [
  { name: "Pro...", icon: colorWheel },
  { name: "Lay...", icon: layerShape },
  {
    name: "Dis...",
    icon: (
      <>
        <path d="M1 3h22v16H1z" fill="#333" />
        <path d="M3 5h18v12H3z" fill="#b4b8bc" stroke="none" />
        <path d="M8 19h8v3H8z" fill="#333" />
      </>
    ),
  },
  {
    name: "Help",
    icon: (
      <>
        <path d="M1 1h22v22H1z" fill="#e4e8fc" stroke="#7888d0" />
        <path d="M1 1h22v4H1z" fill="#2c48b8" stroke="none" />
        <circle cx="12" cy="14" r="8" fill="#3552c4" stroke="none" />
        <path d="M9.500 12q0-3 2.500-3t2.500 3q0 1-1.500 2t-1 2" stroke="#fff" strokeWidth="1.8" />
        <circle cx="12" cy="19" r="1.2" fill="#fff" stroke="none" />
      </>
    ),
  },
];

const LAYER_TOOLS: Tool[] = [
  { name: "New layer", icon: newPage },
  { name: "New sublayer", icon: copyPages },
  { name: "Delete", icon: <path d="M2 2l20 20M22 2 2 22" stroke="#8c8e92" strokeWidth="3.5" /> },
  { name: "Move up", icon: <path d="M1 17 12 5l11 12z" fill="#999" stroke="#333" strokeWidth="1.5" /> },
  { name: "Move down", icon: <path d="M1 8h22L12 20z" fill="#b8babe" stroke="#888" /> },
  { name: "Move left", icon: <path d="M17 1v22L4 12z" fill="#aaa" stroke="#888" /> },
  { name: "Filter", icon: <path d="M2 2h20l-8 10v11h-4V12z" fill="url(#gGrey)" stroke="#333" strokeWidth="1.4" /> },
  {
    name: "Columns",
    icon: (
      <>
        <path d="M4 2h13l4 4v17H4z" fill="#c0c2c6" stroke="#888" />
        <path d="M7 8v13M11 6v15M16 6v15M5 12h15M5 17h15" stroke="#888" />
      </>
    ),
  },
  {
    name: "Tools",
    icon: (
      <>
        <path d="M14 9 3 22" stroke="#222" strokeWidth="4" />
        <path d="M6 4q5-4 10-1l4 5 3-1v5l-4 1-3-3-5 3 0-6q-2-3-5-3z" fill="#444" stroke="#111" />
      </>
    ),
  },
  {
    name: "Layer help",
    icon: (
      <>
        <circle cx="12" cy="12" r="10.5" fill="#555" stroke="#333" />
        <path d="M8 9.500q0-4 4-4t4 4q0 2-2.500 3T12 16" stroke="#fff" strokeWidth="2.3" />
        <circle cx="12" cy="18.7" r="1.4" fill="#fff" stroke="none" />
      </>
    ),
  },
];

function LayerPanel() {
  const [tab, setTab] = useState("Lay...");
  return (
    <aside className="mb-1 flex w-[410px] flex-col pt-1.5 text-lg text-[#111]">
      <div className="mb-1 h-1 bg-[#b8bac4]" />
      <div className="flex h-[38px] items-end">
        {PANEL_TABS.map((t) => (
          <button
            key={t.name}
            type="button"
            onClick={() => setTab(t.name)}
            className={`h-full bg-[#a6a9b6] p-px pb-0 ${
              t.name === "Help"
                ? "flex-1 [clip-path:polygon(0_4px,4px_0,70%_0,100%_100%,0_100%)]"
                : "w-[94px] [clip-path:polygon(0_4px,4px_0,calc(100%-20px)_0,100%_50%,100%_100%,0_100%)]"
            }`}
          >
            <span
              className={`flex h-full items-center gap-1.5 pl-2 ${
                t.name === "Help"
                  ? "[clip-path:polygon(0_4px,4px_0,70%_0,calc(100%-1px)_100%,0_100%)]"
                  : "[clip-path:polygon(0_4px,4px_0,calc(100%-20px)_0,100%_50%,100%_100%,0_100%)]"
              } ${t.name === tab ? "bg-white" : "border-b border-[#a6a9b6] bg-[#d9dce8]"}`}
            >
              <Svg className="size-[26px] shrink-0">{t.icon}</Svg>
              {t.name}
            </span>
          </button>
        ))}
        <button type="button" aria-label="Panel options" className="pb-0.5"><Gear className="size-[26px]" /></button>
      </div>
      <div className="flex flex-1 flex-col border-b-2 border-l-2 border-[#a8aab2] bg-white">
        <div className="flex h-[37px] items-center border-b-2 border-[#a8aab2] bg-[#f8f8fa]">
          {LAYER_TOOLS.map((t) => (
            <button key={t.name} type="button" aria-label={t.name} className="flex w-[37px] justify-center">
              <Svg className="size-6">{t.icon}</Svg>
            </button>
          ))}
        </div>
        <table className="w-full table-fixed">
          <colgroup>
            <col />
            <col className="w-9" />
            <col className="w-[30px]" />
            <col className="w-[30px]" />
            <col className="w-8" />
            <col className="w-[62px]" />
          </colgroup>
          <thead>
            <tr className="h-[42px] border-b border-[#f0f0f0]">
              <th className="border-r border-[#ececec] pl-2.5 text-left font-normal">Name</th>
              <th className="border-r border-[#ececec]" />
              <th className="border-r border-[#ececec]" />
              <th className="border-r border-[#ececec]" />
              <th className="border-r border-[#ececec]" />
              <th className="pl-2.5 text-left font-normal whitespace-nowrap">Materi</th>
            </tr>
          </thead>
          <tbody>
            {LAYERS.map((l) => (
              <tr key={l.name} className={`h-[30px] ${l.current ? "bg-[#3394f8] text-white" : ""}`}>
                <td className={`pl-3.5 leading-7 ${l.current ? "text-xl font-bold" : ""}`}>{l.name}</td>
                <td>
                  {l.current && (
                    <svg viewBox="0 0 20 18" className="mx-auto w-5" fill="none">
                      <path d="M2 10l5 5L18 3" stroke="#fff" strokeWidth="6" />
                      <path d="M2 10l5 5L18 3" stroke="#000" strokeWidth="4" />
                    </svg>
                  )}
                </td>
                <td>
                  {!l.current && (
                    <Svg className="mx-auto size-[22px]">
                      <path d="M12 1q7 0 7 7 0 3-4 7v6l-3 2-3-2v-6Q5 11 5 8q0-7 7-7z" fill="#ffff90" stroke="#77772a" strokeWidth="1.4" />
                      <path d="M9 17v4l3 2 3-2v-4" fill="#888" strokeWidth="1.6" />
                    </Svg>
                  )}
                </td>
                <td>
                  {!l.current && (
                    <Svg className="mx-auto size-[22px]">
                      <path d="M3 11h13v11H3z" fill="#fff" strokeWidth="2" />
                      <path d="M13 11V6q0-4 4-4t4 4v3" strokeWidth="2" />
                    </Svg>
                  )}
                </td>
                <td>
                  <svg viewBox="0 0 22 22" className="mx-auto w-[22px]">
                    <path d="M1 1h20v20H1z" fill={l.color} stroke={l.current ? "#d8f0d8" : "#000"} strokeWidth="2" />
                  </svg>
                </td>
                <td>
                  <span className={`ml-1 block size-[22px] rounded-full ${l.current ? "bg-white" : "border border-dashed border-[#ececec]"}`} />
                </td>
              </tr>
            ))}
          </tbody>
        </table>
        <div className="mt-auto flex h-7 items-center bg-[#f0efef]">
          <button type="button" aria-label="Scroll left" className="flex w-7 justify-center">
            <Chevron d="M9 1 4 6l5 5" className="size-3.5" />
          </button>
          <div className="flex h-full flex-1">
            <div className="w-1/2 bg-[#cac9c9]" />
          </div>
          <button type="button" aria-label="Scroll right" className="flex w-6 justify-center">
            <Chevron d="M3 1l5 5-5 5" className="size-3.5" />
          </button>
        </div>
      </div>
    </aside>
  );
}

function OsnapBar() {
  const [on, setOn] = useState<Record<string, boolean>>(
    Object.fromEntries(OSNAPS.map((o) => [o.name, o.on])),
  );
  return (
    <section className="pl-2">
      <div className="flex h-[59px] items-start gap-3.5 border-l-2 border-[#c2c4cc] pt-1 pl-2.5 text-lg text-[#1a1a1a]">
        {OSNAPS.map((o) => (
          <label key={o.name} className="flex items-center gap-2">
            <span className="relative flex">
              <input
                type="checkbox"
                checked={on[o.name]}
                onChange={(e) => setOn((v) => ({ ...v, [o.name]: e.target.checked }))}
                className={`appearance-none ${
                  o.dim ? "size-[26px] border border-[#a8a8ae] bg-[#e6e6ec]" : "size-[23px] border-2 border-[#74767c] bg-white"
                }`}
              />
              {on[o.name] && (
                <svg viewBox="0 0 24 24" className="pointer-events-none absolute inset-0 size-full" fill="none" stroke="#000" strokeWidth="3.5">
                  <path d="M6 11l4.5 5.5L18 6" />
                </svg>
              )}
            </span>
            {o.name}
          </label>
        ))}
      </div>
    </section>
  );
}

function StatusBar() {
  const cell = "flex items-center justify-center border-r border-[#9c9ea6] whitespace-nowrap";
  return (
    <footer className="mt-0.5 flex h-[34px] border-t-2 border-[#9c9ea6] text-[22px] text-[#111]">
      <button type="button" className={`${cell} w-[99px]`}>CPlane</button>
      <span className={`${cell} w-[155px]`}>x 104.13</span>
      <span className={`${cell} w-[155px]`}>y 0.00</span>
      <span className={`${cell} w-[155px]`}>z 4.09</span>
      <button type="button" className={`${cell} w-[155px]`}>Meters</button>
      <button type="button" className="flex w-[304px] items-center gap-1 border-r border-[#9c9ea6] pl-1.5">
        <span className="size-6 border-2 border-[#000078] bg-[#0000ff]" />
        Superficie Base
      </button>
      <button type="button" className={`${cell} w-[134px]`}>Grid Snap</button>
      <button type="button" className={`${cell} w-[83px] bg-[#e0f2fb] font-bold`}>Ortho</button>
      <button type="button" className={`${cell} w-[95px]`}>Planar</button>
      <button type="button" className={`${cell} w-[95px] bg-[#e0f2fb] font-bold`}>Osnap</button>
      <button type="button" className={`${cell} w-[150px]`}>SmartTrack</button>
      <button type="button" className={`${cell} w-[115px] bg-[#e0f2fb] font-bold`}>Gumball</button>
      <button type="button" className={`${cell} w-48`}>Record History</button>
      <button type="button" className={`${cell} w-[79px]`}>Filter</button>
      <span className="mr-2.5 flex flex-1 items-center border-r border-[#9c9ea6] pl-1.5">CPU use: 5.0 %</span>
    </footer>
  );
}

export default function App() {
  return (
    <div className="flex min-h-screen flex-col bg-[#dfe1e9] font-['Liberation_Sans',Arial,sans-serif] text-black">
      <Defs />
      <MenuBar />
      <CommandArea />
      <Toolbars />
      <main className="flex flex-1 pb-3">
        <SideTools />
        <div className="mr-[13px] flex flex-1 flex-col">
          <div className="grid flex-1 grid-cols-2 grid-rows-2 gap-1 bg-[#e2e6f2]">
            <TopView />
            <PerspectiveView />
            <div className="relative grid">
              <FrontView />
              <div className="absolute top-[201px] left-[612px] bg-white px-1 font-['Open_Sans',sans-serif] text-2xl leading-[30px] whitespace-nowrap shadow-[4px_4px_4px_rgba(0,0,0,0.4)]">
                Int, End
              </div>
            </div>
            <RightView />
          </div>
          <ViewTabs />
        </div>
        <LayerPanel />
      </main>
      <OsnapBar />
      <StatusBar />
    </div>
  );
}
